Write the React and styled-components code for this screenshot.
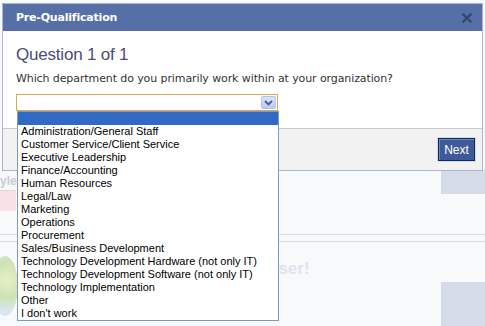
import styled, { createGlobalStyle } from "styled-components";

const GlobalStyle = createGlobalStyle`
  html, body {
    margin: 0;
    padding: 0;
    background: #f8f9fb;
    font-family: "Liberation Sans", Arial, sans-serif;
  }
`;

const departments = [
    "Administration/General Staff",
    "Customer Service/Client Service",
    "Executive Leadership",
    "Finance/Accounting",
    "Human Resources",
    "Legal/Law",
    "Marketing",
    "Operations",
    "Procurement",
    "Sales/Business Development",
    "Technology Development Hardware (not only IT)",
    "Technology Development Software (not only IT)",
    "Technology Implementation",
    "Other",
    "I don't work",
];

const Page = styled.div`
    position: relative;
    width: 485px;
    height: 326px;
    overflow: hidden;
    background: #f8f9fb;
`;

/* faded page behind the modal */
const Backdrop = styled.div`
    display: flex;
    flex-direction: column;
    padding-top: 170px;
`;

const BgRow = styled.div`
    display: flex;
    align-items: flex-start;
    height: ${p => p.$h}px;
`;

const BgLeft = styled.div`
    width: 16px;
    display: flex;
    flex-direction: column;
`;

const BgLabel = styled.div`
    font-weight: bold;
    font-size: 12px;
    color: #c9ccd3;
    margin-top: 4px;
    line-height: 14px;
    white-space: nowrap;
`;

const BgPink = styled.div`
    height: 20px;
    margin-top: 2px;
    background: #f7e2e6;
    border-top: 1px solid #eed0d6;
`;

const BgBadge = styled.div`
    width: 26px;
    height: 60px;
    margin: 14px 0 0 -8px;
    border-radius: 50%;
    background: radial-gradient(circle at 60% 40%, #e6f0c4 0%, #cfe2b4 45%, #d7e6f2 80%);
`;

const BgMain = styled.div`
    flex: 1;
    overflow: hidden;
`;

const BgPanel = styled.div`
    width: 44px;
    height: ${p => p.$h}px;
    margin-top: ${p => p.$top || 0}px;
    background: #d6dce7;
`;

const BgRule = styled.div`
    height: 1px;
    background: #d5dbe7;
    margin-bottom: ${p => p.$gap || 0}px;
`;

const BgGreeting = styled.div`
    font-weight: bold;
    font-size: 17px;
    color: #dfe3ec;
    margin: 17px 0 0 252px;
    white-space: nowrap;
`;

const Dialog = styled.div`
    position: absolute;
    left: 2px;
    top: 3px;
    width: 481px;
    box-sizing: border-box;
    border: 1px solid #a8b6d3;
    background: #fff;
`;

const TitleBar = styled.div`
    height: 27px;
    display: flex;
    align-items: center;
    justify-content: space-between;
    padding: 0 10px 0 13px;
    background: #5670a7;
    color: #fff;
    font-family: "DejaVu Sans", Tahoma, sans-serif;
    font-weight: bold;
    font-size: 11px;
    letter-spacing: -0.2px;
`;

const Close = styled.svg`
    display: block;
`;

const Body = styled.div`
    padding: 13px 13px 17px 13px;
    color: #333;
`;

const Heading = styled.h2`
    margin: 0;
    font-family: "Liberation Sans", Arial, sans-serif;
    font-weight: normal;
    font-size: 17px;
    line-height: 22px;
    letter-spacing: -0.2px;
    color: #4a4c78;
`;

const Prompt = styled.p`
    margin: 6px 0 8px;
    font-family: "DejaVu Sans", Tahoma, sans-serif;
    font-size: 11px;
    line-height: 14px;
    letter-spacing: -0.1px;
    color: #333;
`;

const Select = styled.div`
    position: relative;
    width: 262px;
    height: 17px;
    box-sizing: border-box;
    border: 1px solid #d8a94e;
    background: #fff;
    display: flex;
    justify-content: flex-end;
    align-items: center;
    padding-right: 1px;
`;

const Arrow = styled.div`
    width: 15px;
    height: 13px;
    box-sizing: border-box;
    border: 1px solid #b0c2e8;
    border-radius: 2px;
    background: linear-gradient(#dbe5fb, #b9cbf3);
    display: flex;
    align-items: center;
    justify-content: center;
`;

const List = styled.ul`
    position: absolute;
    top: 16px;
    left: 0;
    width: 262px;
    margin: 0;
    padding: 0;
    list-style: none;
    box-sizing: border-box;
    border: 1px solid #7f9db9;
    background: #fff;
    z-index: 2;
`;

const Option = styled.li`
    height: 13px;
    line-height: 13px;
    padding-left: 3px;
    font-family: "Liberation Sans", Arial, sans-serif;
    font-size: 11px;
    color: #000;
    white-space: nowrap;
    background: ${p => (p.$active ? "#316ac5" : "transparent")};
`;

const Footer = styled.div`
    height: 41px;
    border-top: 1px solid #c9c9c9;
    background: #f2f2f2;
    display: flex;
    justify-content: flex-end;
    align-items: center;
    padding-right: 7px;
`;

const NextButton = styled.button`
    width: 37px;
    height: 23px;
    padding: 0;
    background: #3f5a9a;
    color: #fff;
    border: 1px solid #0f2a5c;
    box-shadow: inset 1px 1px 0 #6f86b8, 0 0 0 1px #d3dbea;
    font-family: "Liberation Sans", Arial, sans-serif;
    font-size: 12px;
`;

export default function App() {
    return (
        <>
            <GlobalStyle />
            <Page>
                <Backdrop>
                    <BgRow $h={64}>
                        <BgLeft>
                            <BgLabel>yles</BgLabel>
                            <BgPink />
                        </BgLeft>
                        <BgMain />
                        <BgPanel $h={24} />
                    </BgRow>
                    <BgRule $gap={6} />
                    <BgRule />
                    <BgRow $h={84}>
                        <BgLeft>
                            <BgBadge />
                        </BgLeft>
                        <BgMain>
                            <BgGreeting>user!</BgGreeting>
                        </BgMain>
                        <BgPanel $h={44} $top={40} />
                    </BgRow>
                </Backdrop>

                <Dialog>
                    <TitleBar>
                        Pre-Qualification
                        <Close width="10" height="10" viewBox="0 0 10 10">
                            <path d="M1.5 1.5 L8.5 8.5 M8.5 1.5 L1.5 8.5" stroke="#34476e" strokeWidth="2.4" strokeLinecap="square" />
                        </Close>
                    </TitleBar>
                    <Body>
                        <Heading>Question 1 of 1</Heading>
                        <Prompt>Which department do you primarily work within at your organization?</Prompt>
                        <Select>
                            <Arrow>
                                <svg width="9" height="6" viewBox="0 0 9 6">
                                    <path d="M1 1 L4.5 4.5 L8 1" fill="none" stroke="#4a5f88" strokeWidth="1.8" />
                                </svg>
                            </Arrow>
                            <List>
                                <Option $active>&nbsp;</Option>
                                {departments.map(d => <Option key={d}>{d}</Option>)}
                            </List>
                        </Select>
                    </Body>
                    <Footer>
                        <NextButton>Next</NextButton>
                    </Footer>
                </Dialog>
            </Page>
        </>
    );
}
